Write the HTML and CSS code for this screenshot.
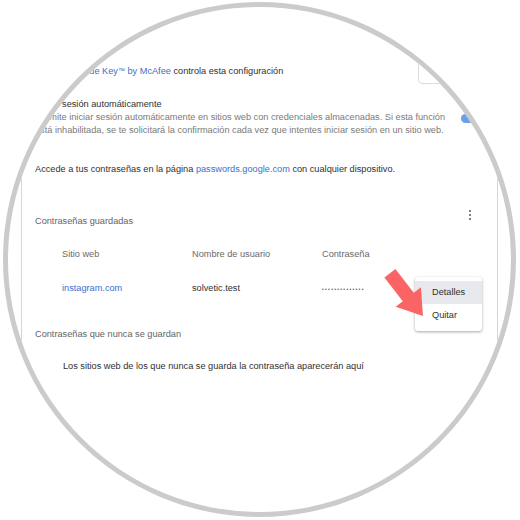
FILE: index.html
```html
<!DOCTYPE html>
<html lang="es">
<head>
<meta charset="utf-8">
<title>Contraseñas</title>
<link rel="stylesheet" href="styles.css">
</head>
<body>
<div class="lens">
  <div class="page">
    <div class="card">
      <div class="row ext">
        <span class="ext-icon"><svg width="16" height="16" viewBox="0 0 16 16"><rect x="2" y="2" width="12" height="12" rx="2" fill="#c4c4c4"/></svg></span>
        <span class="ext-text"><span class="link">True Key<span class="tm">™</span> by McAfee</span> controla esta configuración</span>
        <button class="btn">Inhabilitar</button>
      </div>
      <div class="row auto">
        <div class="auto-text">
          <div class="title">Iniciar sesión automáticamente</div>
          <div class="desc">Permite iniciar sesión automáticamente en sitios web con credenciales almacenadas. Si esta función está inhabilitada, se te solicitará la confirmación cada vez que intentes iniciar sesión en un sitio web.</div>
        </div>
        <span class="toggle"></span>
      </div>
      <p class="access">Accede a tus contraseñas en la página <span class="link">passwords.google.com</span> con cualquier dispositivo.</p>
      <div class="sec-head">
        <span class="sec-title">Contraseñas guardadas</span>
        <svg class="kebab" width="12" height="12" viewBox="0 0 12 12"><circle cx="6" cy="2" r="1.1" fill="#5f6368"/><circle cx="6" cy="6" r="1.1" fill="#5f6368"/><circle cx="6" cy="10" r="1.1" fill="#5f6368"/></svg>
      </div>
      <div class="pw-grid">
        <span class="col-head">Sitio web</span>
        <span class="col-head">Nombre de usuario</span>
        <span class="col-head">Contraseña</span>
        <span class="link">instagram.com</span>
        <span class="cell">solvetic.test</span>
        <span class="cell"><span class="dots">••••••••••••••</span></span>
      </div>
      <div class="sec-title never">Contraseñas que nunca se guardan</div>
      <p class="empty">Los sitios web de los que nunca se guarda la contraseña aparecerán aquí</p>
    </div>
    <div class="menu">
      <div class="menu-item active">Detalles</div>
      <div class="menu-item">Quitar</div>
    </div>
    <svg class="arrow" width="520" height="520" viewBox="0 0 520 520">
      <polygon points="384.4,277.6 402.8,301.3 395.7,306.8 423,316 420.9,287.2 413.8,292.7 395.4,269" fill="#fb6464"/>
    </svg>
  </div>
</div>
</body>
</html>
```
FILE: styles.css
```css
html, body {
  margin: 0;
  padding: 0;
  background: #ffffff;
}
body {
  font-family: "Liberation Sans", Arial, sans-serif;
  font-size: 9.2px;
  color: #303030;
}
.lens {
  box-sizing: border-box;
  width: 513px;
  height: 515px;
  margin: 2px 0 0 3px;
  border: 5px solid #cbcbcb;
  border-radius: 50%;
  overflow: hidden;
  background: #ffffff;
}
.page {
  position: relative;
  width: 520px;
  height: 520px;
  margin: -7px 0 0 -8px;
}
.card {
  box-sizing: border-box;
  width: 477px;
  height: 520px;
  margin-left: 21px;
  border-left: 1px solid #d6d6d6;
  border-right: 1px solid #d6d6d6;
  padding: 58px 10px 0 13px;
}
.row {
  display: flex;
}
.ext {
  height: 26px;
  align-items: center;
}
.ext-icon {
  display: flex;
  width: 16px;
  height: 16px;
  margin-right: 30px;
}
.tm {
  font-size: 7px;
  vertical-align: 1px;
}
.link {
  color: #3b6fd1;
}
.btn {
  box-sizing: border-box;
  margin-left: auto;
  width: 69px;
  height: 26px;
  border: 1px solid #dcdcdc;
  border-radius: 4px;
  background: #ffffff;
  color: #3b6fd1;
  font: inherit;
  text-align: left;
  padding: 0 0 0 11px;
}
.auto {
  margin-top: 14px;
  align-items: flex-start;
}
.auto-text {
  width: 412px;
  line-height: 13px;
}
.title {
  color: #303030;
}
.desc {
  color: #7a7a7a;
}
.toggle {
  margin-left: auto;
  margin-top: 15.5px;
  width: 26px;
  height: 9px;
  border-radius: 5px;
  background: #6f9ee8;
}
.access {
  margin: 25.5px 0 0;
  line-height: 13px;
}
.sec-head {
  display: flex;
  justify-content: space-between;
  align-items: flex-start;
  margin-top: 30.5px;
}
.sec-title {
  color: #646464;
  line-height: 13px;
}
.sec-head .sec-title {
  margin-top: 8.5px;
}
.kebab {
  margin: 3px 11px 0 0;
}
.pw-grid {
  display: grid;
  grid-template-columns: 130px 130px 1fr;
  row-gap: 21px;
  margin: 20px 0 0 27px;
  line-height: 13px;
}
.col-head {
  color: #6a6a6a;
}
.cell {
  color: #303030;
}
.dots {
  font-size: 5px;
  letter-spacing: 1.3px;
  color: #555;
}
.never {
  display: block;
  margin-top: 32px;
}
.empty {
  margin: 19.5px 0 0;
  padding-left: 28px;
  line-height: 13px;
}
.menu {
  position: absolute;
  left: 415px;
  top: 277px;
  width: 67px;
  padding: 4px 0 5px;
  background: #ffffff;
  border-radius: 3px;
  box-shadow: 0 1px 3px rgba(0, 0, 0, 0.35);
}
.menu-item {
  height: 22.5px;
  line-height: 22.5px;
  padding-left: 17px;
  color: #303030;
}
.menu-item.active {
  background: #e8e9ed;
}
.arrow {
  position: absolute;
  left: 0;
  top: 0;
  pointer-events: none;
}
```
